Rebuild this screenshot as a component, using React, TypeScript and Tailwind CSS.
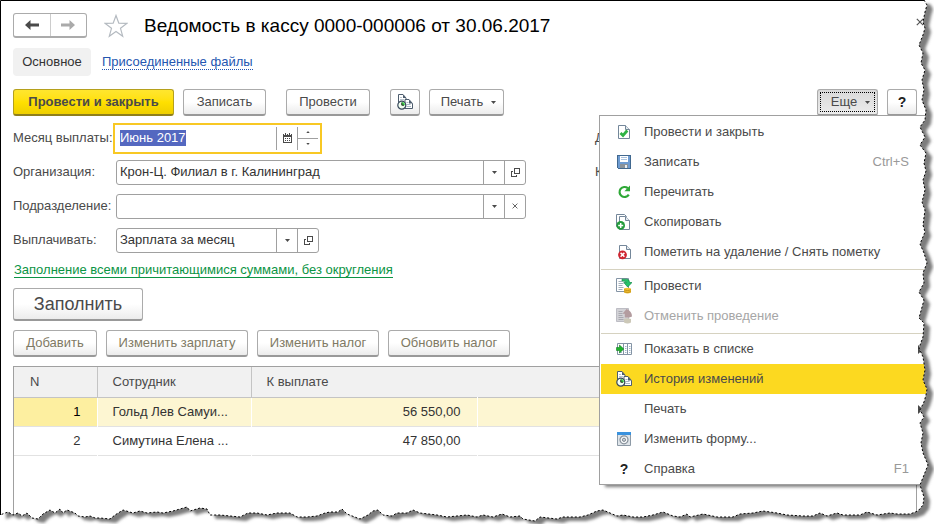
import React, { useEffect, useRef } from 'react';
import clsx from 'clsx';

/* ---------- icons ---------- */

const Caret = ({ up = false, small = false }: { up?: boolean; small?: boolean }) => (
  <svg width={small ? 4 : 5} height={small ? 2 : 3} viewBox="0 0 5 3" className={clsx('shrink-0', up && 'rotate-180')}>
    <path d="M0 0h5L2.5 3z" fill="#4a4a4a" />
  </svg>
);

const ArrowIcon = ({ color, flip = false }: { color: string; flip?: boolean }) => (
  <svg width="14" height="10" viewBox="0 0 14 10" className={clsx(flip && 'rotate-180')}>
    <path d="M0 5 5.5 0V3.6H14V6.4H5.5V10z" fill={color} />
  </svg>
);

const StarIcon = () => (
  <svg width="24" height="24" viewBox="0 0 24 24" fill="none" stroke="#b4bac0" strokeWidth="1.2">
    <path d="M12 1.5 14.8 9.2 22.8 9.4 16.5 14.3 18.7 22.2 12 17.6 5.3 22.2 7.5 14.3 1.2 9.4 9.2 9.2z" />
  </svg>
);

const CalendarIcon = () => (
  <svg width="9" height="10" viewBox="0 0 9 10" fill="#4a4a4a" shapeRendering="crispEdges">
    <path d="M0 1h9v9H0zM1 4v5h7V4z" fillRule="evenodd" />
    <path d="M2 0h1v1H2zM6 0h1v1H6zM2 5h1v1H2zM4 5h1v1H4zM6 5h1v1H6zM2 7h1v1H2zM4 7h1v1H4zM6 7h1v1H6z" />
    <path d="M1 1h1v1H1zM3 1h1v1H3zM5 1h1v1H5zM7 1h1v1H7z" fill="#fff" />
  </svg>
);

const OpenIcon = () => (
  <svg width="9" height="9" viewBox="0 0 9 9" fill="none" stroke="#4a4a4a" shapeRendering="crispEdges">
    <path d="M3.5 0.5h5v5h-5zM2 3.5H0.5v5h5V7" />
  </svg>
);

const CrossIcon = ({ size }: { size: number }) => (
  <svg width={size} height={size} viewBox="0 0 8 8" stroke="#555" strokeWidth="1.2">
    <path d="M0.8 0.8l6.4 6.4M7.2 0.8 0.8 7.2" />
  </svg>
);

const HistoryIcon = () => (
  <svg width="16" height="16" viewBox="0 0 16 16">
    <path d="M1.5 0.5h4.5l3 3.5v8.5h-7.5z" fill="#fff" stroke="#4d5d6e" />
    <path d="M6 0.5 9 4H6z" fill="#4d5d6e" />
    <path d="M3 3.5h2M3 5.5h4" stroke="#b9c3cc" />
    <path d="M8 5.5h4l3.5 4v5H8z" fill="#fff" stroke="#4d5d6e" />
    <path d="M12 5.5l3.5 4H12z" fill="#4d5d6e" />
    <path d="M9.5 8.5h2M9.5 10.5h4M9.5 12.5h4.5" stroke="#a9b8c6" />
    <circle cx="4.8" cy="11.2" r="4" fill="#f2fff2" stroke="#37475a" strokeWidth="1.2" />
    <path d="M4.8 8.1A3.1 3.1 0 0 1 7.9 11.2H4.8z" fill="#3fd44e" />
    <path d="M4.8 8.6v2.6H7" fill="none" stroke="#1c2b1c" />
  </svg>
);

const PageShape = () => (
  <>
    <path d="M3.5 1.5h7l4 4v9h-11z" fill="#fff" stroke="#74879a" />
    <path d="M10.5 1.5v4h4" fill="#e3e9ee" stroke="#74879a" />
  </>
);

const PostCloseIcon = () => (
  <svg width="16" height="16" viewBox="0 0 16 16">
    <path d="M2.5 1.5h7l4 4v9h-11z" fill="#fff" stroke="#74879a" />
    <path d="M9.5 1.5v4h4" fill="#e3e9ee" stroke="#74879a" />
    <path d="M4.5 9 7 11.5l4.3-5" fill="none" stroke="#2fb344" strokeWidth="2.8" />
  </svg>
);

const SaveIcon = () => (
  <svg width="16" height="16" viewBox="0 0 16 16" shapeRendering="crispEdges">
    <path d="M1.5 1.5h13v13h-12l-1-1z" fill="#6d9bd1" stroke="#41688f" />
    <path d="M4 2h8v6H4z" fill="#fff" />
    <path d="M5 3.5h6M5 5.5h6" stroke="#a9c2df" />
    <path d="M4 10h8v4H4z" fill="#8a9299" />
    <path d="M9 11h2v3H9z" fill="#e8edf2" />
  </svg>
);

const RereadIcon = () => (
  <svg width="16" height="16" viewBox="0 0 16 16">
    <path d="M11.8 4.2A5 5 0 1 0 12.8 10.6" fill="none" stroke="#2ea836" strokeWidth="2.2" />
    <path d="M14 1.6v5.6H8.4z" fill="#2ea836" />
  </svg>
);

const CopyIcon = () => (
  <svg width="16" height="16" viewBox="0 0 16 16">
    <path d="M0.5 0.5h8l2 2v10h-10z" fill="#fff" stroke="#74879a" />
    <path d="M3.5 2.5h6l4 4v9h-10z" fill="#fff" stroke="#74879a" />
    <path d="M9.5 2.5v4h4" fill="#e3e9ee" stroke="#74879a" />
    <circle cx="4.7" cy="11.4" r="4.3" fill="#239b3c" />
    <path d="M4.7 8.9v5M2.2 11.4h5" stroke="#fff" strokeWidth="1.5" />
  </svg>
);

const DeleteMarkIcon = () => (
  <svg width="16" height="16" viewBox="0 0 16 16">
    <PageShape />
    <circle cx="6.5" cy="10.8" r="4.4" fill="#cf2530" />
    <path d="M4.6 8.9l3.8 3.8M8.4 8.9l-3.8 3.8" stroke="#fff" strokeWidth="1.5" />
  </svg>
);

const PostIcon = () => (
  <svg width="16" height="16" viewBox="0 0 16 16">
    <path d="M0.5 0.5h12v13H0.5z" fill="#fff" stroke="#8494a5" />
    <path d="M2.5 3.5h4M2.5 5.5h5M2.5 7.5h4M2.5 9.5h5M2.5 11.5h4" stroke="#a3afbb" />
    <path d="M6 1.2h4.5q3 0 3 3.3H16L11.7 9 7.8 4.5h2.6Q10 2.8 6 3z" fill="#25c267" stroke="#138a48" strokeWidth="0.7" />
    <path d="M8 10.5q3.5-1.5 7 0v4q-3.5 2-7 0z" fill="#f1c232" />
    <path d="M8 11.8q3.5 1.6 7 0M8 13.7q3.5 1.6 7 0" stroke="#b98412" fill="none" strokeWidth="0.8" />
  </svg>
);

const UnpostIcon = () => (
  <svg width="16" height="16" viewBox="0 0 16 16">
    <path d="M0.5 0.5h12v13H0.5z" fill="#d2d2d6" stroke="#bdbdc4" />
    <path d="M2.5 3.5h4M2.5 5.5h4M2.5 7.5h4M2.5 9.5h5M2.5 11.5h5" stroke="#a9a9b0" />
    <path d="M10.5 1 6.5 5.8h2.3v3.7h4.7l2.5-1Q16 3 10.5 1z" fill="#b39c9f" />
    <path d="M8 11q3.5-1.5 7 0v3.5q-3.5 2-7 0z" fill="#ccc8b8" />
  </svg>
);

const ShowInListIcon = () => (
  <svg width="16" height="16" viewBox="0 0 16 16">
    <path d="M1.5 2.5h14v11h-14z" fill="#fff" stroke="#8494a5" />
    <path d="M7.5 3v10M11.5 3v10" stroke="#8494a5" />
    <path d="M3 11.5h3M9 5.5h1.5M9 7.5h1.5M9 9.5h1.5M9 11.5h1.5M13 5.5h1.5M13 7.5h1.5M13 9.5h1.5M13 11.5h1.5" stroke="#9fb6cc" />
    <path d="M0.5 6.5h3V4l4.3 4-4.3 4V9.5h-3z" fill="#1fb22e" stroke="#10801c" strokeWidth="0.6" />
  </svg>
);

const EditFormIcon = () => (
  <svg width="16" height="16" viewBox="0 0 16 16">
    <path d="M1.5 1.5h13v13h-13z" fill="#dfe5ea" stroke="#8d9aa6" />
    <path d="M1 1h14v3H1z" fill="#3a92de" />
    <circle cx="8" cy="8.8" r="4" fill="#f6f8f9" stroke="#87919b" strokeWidth="1.2" />
    <circle cx="8" cy="8.8" r="1.6" fill="#c9d0d6" stroke="#7d8791" />
  </svg>
);

const HelpMark = () => <span className="text-sm font-bold text-[#222]">?</span>;

/* ---------- controls ---------- */

interface CommandButtonProps extends React.ButtonHTMLAttributes<HTMLButtonElement> {
  className?: string;
}

const CommandButton: React.FC<CommandButtonProps> = ({ className, children, ...rest }) => (
  <button
    type="button"
    className={clsx(
      'flex h-[27px] items-center justify-center whitespace-nowrap rounded-[3px] border border-b-2 border-[#ababab] border-b-[#999]',
      className
    )}
    {...rest}
  >
    {children}
  </button>
);

const plain = 'bg-linear-to-b from-white from-50% to-[#ececec]';

const FieldButton: React.FC<{ label: string; children: React.ReactNode }> = ({ label, children }) => (
  <button
    type="button"
    aria-label={label}
    className="flex w-[21px] shrink-0 items-center justify-center self-stretch border-l border-[#a0a0a0]"
  >
    {children}
  </button>
);

interface FieldRowProps {
  id: string;
  label: string;
  extra?: string;
  children: React.ReactNode;
}

const FieldRow: React.FC<FieldRowProps> = ({ id, label, extra, children }) => (
  <div className="flex h-[34px] items-center">
    <label htmlFor={id} className="w-[103px] shrink-0 whitespace-nowrap">
      {label}
    </label>
    <div className="w-[479px] shrink-0">{children}</div>
    {extra && <span>{extra}</span>}
  </div>
);

const fieldBox = 'flex h-[25px] items-center rounded-[3px] border border-[#a0a0a0] bg-white text-[#333]';
const fieldInput = 'min-w-0 flex-1 appearance-none bg-transparent pl-[3px] outline-none';

/* ---------- "Еще" menu ---------- */

interface MenuEntry {
  text: string;
  icon?: React.ReactNode;
  shortcut?: string;
  submenu?: boolean;
  disabled?: boolean;
  active?: boolean;
}

const menuGroups: MenuEntry[][] = [
  [
    { text: 'Провести и закрыть', icon: <PostCloseIcon /> },
    { text: 'Записать', icon: <SaveIcon />, shortcut: 'Ctrl+S' },
    { text: 'Перечитать', icon: <RereadIcon /> },
    { text: 'Скопировать', icon: <CopyIcon /> },
    { text: 'Пометить на удаление / Снять пометку', icon: <DeleteMarkIcon /> },
  ],
  [
    { text: 'Провести', icon: <PostIcon /> },
    { text: 'Отменить проведение', icon: <UnpostIcon />, disabled: true },
  ],
  [
    { text: 'Показать в списке', icon: <ShowInListIcon />, submenu: true },
    { text: 'История изменений', icon: <HistoryIcon />, active: true },
    { text: 'Печать', submenu: true },
    { text: 'Изменить форму...', icon: <EditFormIcon /> },
    { text: 'Справка', icon: <HelpMark />, shortcut: 'F1' },
  ],
];

const MoreMenu = () => (
  <div
    role="menu"
    className="absolute top-[26px] -right-[51px] z-10 w-[330px] border border-[#a0a0a0] bg-white px-px shadow-[5px_3px_3px_-1px_rgba(0,0,0,0.5)]"
  >
    {menuGroups.map((group, i) => (
      <div key={i} className={clsx(i > 0 && 'mt-0.5 border-t border-[#d6d2c0]', i < 2 && 'pt-px')}>
        {group.map((entry) => (
          <button
            key={entry.text}
            type="button"
            role="menuitem"
            disabled={entry.disabled}
            className={clsx(
              'relative flex h-[30px] w-full items-center pr-[18px] pl-[15px] text-left',
              entry.disabled && 'text-[#a6a6a6]',
              entry.active && 'bg-[#fcd920]'
            )}
          >
            <span className="flex w-[28px] shrink-0">
              <span className="flex w-4 justify-center">{entry.icon}</span>
            </span>
            <span className="whitespace-nowrap">{entry.text}</span>
            {entry.shortcut && <span className="ml-auto text-[#999]">{entry.shortcut}</span>}
            {entry.submenu && (
              <svg width="5" height="9" viewBox="0 0 5 9" className="absolute right-1">
                <path d="M0 0v9l5-4.5z" fill="#4a4a4a" />
              </svg>
            )}
          </button>
        ))}
      </div>
    ))}
  </div>
);

/* ---------- torn paper edge ---------- */

const rightEdge =
  '924,0 927,5 925,12 923,22 925,28 923,35 919,45 923,53 921,63 925,70 922,80 924,90 922,100 926,110 925,120 920,127 925,137 920,145 926,153 924,163 926,171 923,180 925,190 922,202 925,210 923,225 925,232 920,244 924,253 927,263 923,273 924,283 919,292 924,300 919,318 924,323 923,337 919,348 923,357 925,370 923,380 927,389 926,395 924,402 920,410 924,417 920,423 923,433 921,443 923,453 926,460 928,465 924,475 920,485 924,497 923,505 918,511';

const bottomEdge =
  '910,514 897,514 890,513 877,515 867,512 860,515 843,515 837,513 827,516 820,513 813,516 803,516 787,515 777,513 763,511 753,513 740,514 733,517 717,517 703,514 690,517 687,514 680,517 673,516 663,512 653,515 643,517 633,517 623,515 617,516 610,513 603,510 597,511 588,515 580,517 570,517 563,517 557,519 540,517 535,521 523,519 520,516 510,517 502,514 493,517 483,515 477,517 467,515 447,517 437,515 420,513 413,510 407,513 397,513 392,516 383,515 378,510 373,511 368,515 360,519 347,514 342,509 338,512 330,512 325,513 317,516 307,517 297,517 290,513 277,513 267,515 257,513 248,513 240,517 230,516 220,515 210,515 207,509 200,508 190,511 187,507 180,509 173,511 163,513 157,512 147,513 140,511 133,513 123,510 115,515 110,519 100,518 95,518 90,516 85,517 78,516 75,513 67,510 63,513 60,509 55,513 50,510 43,514 38,519 32,518 27,513 22,516 18,513 13,515 8,512 0,515';

const TornEdge = () => (
  <svg
    viewBox="0 0 934 524"
    preserveAspectRatio="none"
    className="pointer-events-none absolute inset-0 z-20 h-full w-full"
    aria-hidden="true"
  >
    <defs>
      <clipPath id="outside">
        <polygon points={`${rightEdge} ${bottomEdge} 0,524 934,524 934,0`} />
      </clipPath>
      <filter id="soft" x="-5%" y="-5%" width="110%" height="110%">
        <feGaussianBlur stdDeviation="1.4" />
      </filter>
    </defs>
    <g clipPath="url(#outside)">
      <rect width="934" height="524" fill="#fff" />
      <polygon
        points={`8,8 ${rightEdge} ${bottomEdge}`}
        transform="translate(6 4)"
        fill="#7d7d7d"
        filter="url(#soft)"
      />
    </g>
    <polyline points="0.5,515 0.5,0.5 924,0.5" fill="none" stroke="#000" />
    <polyline points={`${rightEdge} ${bottomEdge}`} fill="none" stroke="#000" strokeDasharray="2 2" />
  </svg>
);

/* ---------- page ---------- */

const rows = [
  { n: 1, employee: 'Гольд Лев Самуи...', amount: '56 550,00', selected: true },
  { n: 2, employee: 'Симутина Елена ...', amount: '47 850,00', selected: false },
];

export default function App() {
  const monthRef = useRef<HTMLInputElement>(null);

  useEffect(() => {
    monthRef.current?.focus();
    monthRef.current?.select();
  }, []);

  return (
    <div className="relative flex min-h-screen flex-col overflow-hidden bg-white pt-px pl-px font-['Liberation_Sans',Arial,sans-serif] text-[13px] leading-4 text-[#4a4a4a]">
      <header className="flex items-center pt-3 pr-2.5 pl-3">
        <div className="flex h-[25px] w-[74px] rounded-[3px] border border-b-2 border-[#ababab]">
          <button type="button" aria-label="Назад" className="flex flex-1 items-center justify-center border-r border-[#ccc]">
            <ArrowIcon color="#4a4a4a" />
          </button>
          <button type="button" aria-label="Вперед" className="flex flex-1 items-center justify-center">
            <ArrowIcon color="#aaa" flip />
          </button>
        </div>
        <button type="button" aria-label="В избранное" className="ml-[17px]">
          <StarIcon />
        </button>
        <h1 className="ml-4 text-[19px] leading-6 whitespace-nowrap text-black">
          Ведомость в кассу 0000-000006 от 30.06.2017
        </h1>
        <button type="button" aria-label="Закрыть" className="mb-2 ml-auto">
          <CrossIcon size={8} />
        </button>
      </header>

      <nav className="mt-2.5 flex items-center gap-[11px] pl-3">
        <a href="#main" className="flex h-7 w-[78px] items-center justify-center rounded bg-[#f1f1f1] text-[#333]">
          Основное
        </a>
        <a href="#files" className="border-b border-dotted border-[#2456b0] leading-[14px] text-[#2456b0]">
          Присоединенные файлы
        </a>
      </nav>

      <div className="mt-[13px] flex items-center pr-[17px] pl-3">
        <CommandButton className="w-[161px] border-[#b5a01c]! border-b-[#8f7f1c]! bg-linear-to-b from-[#ffe62e] via-[#ffe000] to-[#efcf00] font-bold">
          Провести и закрыть
        </CommandButton>
        <CommandButton className={clsx(plain, 'ml-[9px] w-[83px]')}>Записать</CommandButton>
        <CommandButton className={clsx(plain, 'ml-5 w-[84px]')}>Провести</CommandButton>
        <CommandButton aria-label="История изменений" className={clsx(plain, 'ml-5 w-[30px]')}>
          <HistoryIcon />
        </CommandButton>
        <CommandButton className={clsx(plain, 'ml-[9px] w-[75px] gap-2 pl-1')}>
          Печать
          <Caret />
        </CommandButton>
        <div className="relative ml-auto">
          <CommandButton aria-haspopup="menu" aria-expanded="true" className="w-[61px] bg-linear-to-b from-[#d9d9d9] to-[#ececec] p-0.5">
            <span className="flex h-full w-full items-center justify-center gap-2 border border-dotted border-black pl-1.5">
              Еще
              <Caret />
            </span>
          </CommandButton>
          <MoreMenu />
        </div>
        <CommandButton aria-label="Справка" className={clsx(plain, 'ml-[9px] w-[30px]')}>
          <HelpMark />
        </CommandButton>
      </div>

      <form className="mt-[5px] pl-3">
        <FieldRow id="month" label="Месяц выплаты:" extra="Д">
          <div className="-ml-[3px] flex h-[31px] w-[209px] items-center border-2 border-[#f8c824] bg-white p-0.5">
            <input
              id="month"
              ref={monthRef}
              defaultValue="Июнь 2017"
              className="min-w-0 flex-1 pl-[3px] text-[#333] outline-none selection:bg-[#5468c0] selection:text-white"
            />
            <FieldButton label="Выбрать месяц">
              <CalendarIcon />
            </FieldButton>
            <div className="flex w-[21px] shrink-0 flex-col self-stretch border-l border-[#a0a0a0]">
              <button type="button" aria-label="Следующий месяц" className="flex flex-1 items-center justify-center border-b border-[#a0a0a0]">
                <Caret up small />
              </button>
              <button type="button" aria-label="Предыдущий месяц" className="flex flex-1 items-center justify-center">
                <Caret small />
              </button>
            </div>
          </div>
        </FieldRow>
        <FieldRow id="org" label="Организация:" extra="К">
          <div className={clsx(fieldBox, 'w-[410px]')}>
            <input id="org" defaultValue="Крон-Ц. Филиал в г. Калининград" className={fieldInput} />
            <FieldButton label="Выбрать">
              <Caret />
            </FieldButton>
            <FieldButton label="Открыть">
              <OpenIcon />
            </FieldButton>
          </div>
        </FieldRow>
        <FieldRow id="dept" label="Подразделение:">
          <div className={clsx(fieldBox, 'w-[410px]')}>
            <input id="dept" className={fieldInput} />
            <FieldButton label="Выбрать">
              <Caret />
            </FieldButton>
            <FieldButton label="Очистить">
              <CrossIcon size={6} />
            </FieldButton>
          </div>
        </FieldRow>
        <FieldRow id="kind" label="Выплачивать:">
          <div className={clsx(fieldBox, 'w-[203px]')}>
            <select id="kind" className={fieldInput}>
              <option>Зарплата за месяц</option>
            </select>
            <FieldButton label="Выбрать">
              <Caret />
            </FieldButton>
            <FieldButton label="Открыть">
              <OpenIcon />
            </FieldButton>
          </div>
        </FieldRow>
      </form>

      <div className="mt-1.5 flex pl-[13px]">
        <a href="#fill" className="border-b border-[#0b9444] leading-[14px] text-[#0b9444]">
          Заполнение всеми причитающимися суммами, без округления
        </a>
      </div>

      <div className="mt-2.5 pl-3">
        <CommandButton className={clsx(plain, 'h-[33px]! w-[130px] text-lg')}>Заполнить</CommandButton>
      </div>

      <div className="mt-[9px] flex gap-[9px] pl-3 text-[#7f7a64]">
        <CommandButton className={clsx(plain, 'w-[84px]')}>Добавить</CommandButton>
        <CommandButton className={clsx(plain, 'w-[142px]')}>Изменить зарплату</CommandButton>
        <CommandButton className={clsx(plain, 'w-[122px]')}>Изменить налог</CommandButton>
        <CommandButton className={clsx(plain, 'w-[122px]')}>Обновить налог</CommandButton>
      </div>

      <div className="mt-[9px] mr-[17px] ml-3 flex-1 border border-b-0 border-[#a0a0a0]">
        <table className="w-full table-fixed border-collapse">
          <colgroup>
            <col className="w-[83px]" />
            <col className="w-[154px]" />
            <col className="w-[226px]" />
            <col />
          </colgroup>
          <thead>
            <tr className="h-[30px] border-b border-[#c4c4c4] bg-[#f1f1f1] text-left">
              <th className="border-r border-[#c4c4c4] pl-4 font-normal">N</th>
              <th className="border-r border-[#c4c4c4] pl-[15px] font-normal">Сотрудник</th>
              <th className="pl-[15px] font-normal">К выплате</th>
              <th />
            </tr>
          </thead>
          <tbody className="text-[#333]">
            {rows.map((row) => (
              <tr key={row.n} className={clsx('h-[29px] border-b border-[#e2e2e2]', row.selected && 'bg-[#fdf6d2]')}>
                <td className={clsx('border-r border-white pr-4 text-right', row.selected && 'bg-[#fdefa0] text-black')}>
                  {row.n}
                </td>
                <td className="border-r border-white pl-[15px] whitespace-nowrap">{row.employee}</td>
                <td className="border-r border-white pr-4 text-right">{row.amount}</td>
                <td />
              </tr>
            ))}
          </tbody>
        </table>
      </div>

      <TornEdge />
    </div>
  );
}
